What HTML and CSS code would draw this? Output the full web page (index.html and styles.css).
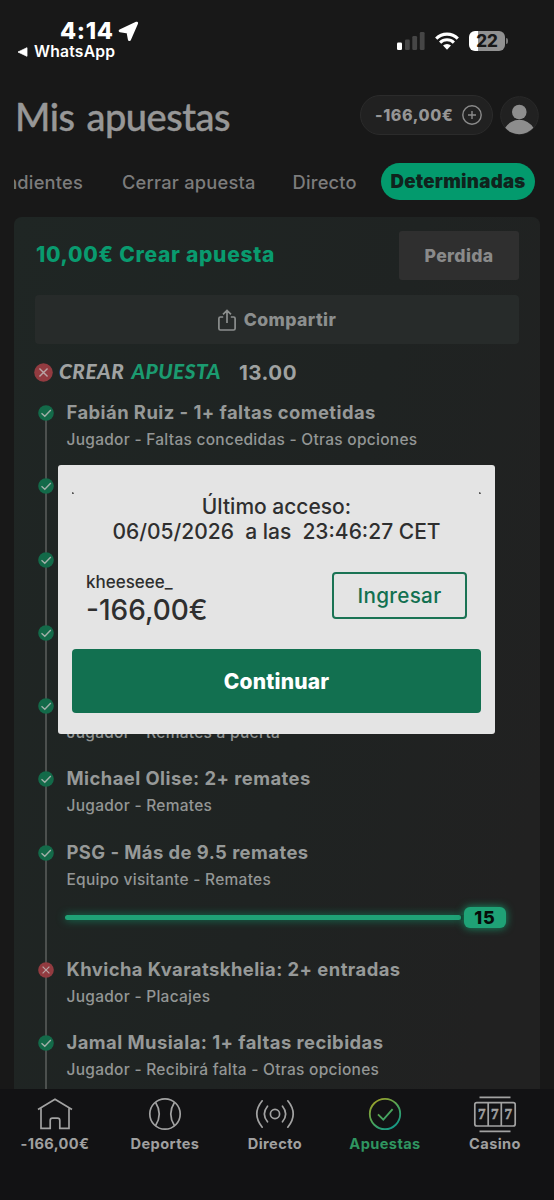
FILE: index.html
```html
<!DOCTYPE html>
<html lang="es">
<head>
<meta charset="utf-8">
<title>Mis apuestas</title>
<link rel="stylesheet" href="styles.css">
</head>
<body>
<svg class="defs" width="0" height="0">
  <defs>
    <symbol id="ok" viewBox="0 0 16 16"><circle cx="8" cy="8" r="7.8" fill="#136a49"/><path d="M3.5 8.3 6.8 11.3 12.8 5.1" fill="none" stroke="#a4b0aa" stroke-width="1.4"/></symbol>
    <symbol id="ko" viewBox="0 0 16 16"><circle cx="8" cy="8" r="7.8" fill="#923b40"/><path d="M4.6 4.6 11.4 11.4M11.4 4.6 4.6 11.4" fill="none" stroke="#b9a5a5" stroke-width="1.2"/></symbol>
    <linearGradient id="ring" gradientUnits="userSpaceOnUse" x1="8" y1="4" x2="28" y2="34"><stop offset="0" stop-color="#a3a025"/><stop offset="0.5" stop-color="#4fa658"/><stop offset="0.95" stop-color="#169885"/></linearGradient>
  </defs>
</svg>
<div class="phone">
  <div class="status">
    <div class="status-left">
      <div class="clock"><span class="time">4:14</span><svg width="21" height="21" viewBox="0 0 21 21"><path d="M18.6 2.2 2.2 9.8 10 11 11.4 18.6Z" fill="#fff" stroke="#fff" stroke-width="3" stroke-linejoin="round"/></svg></div>
      <div class="back"><svg width="11" height="10" viewBox="0 0 11 10"><path d="M10 .7V9.3L1 5Z" fill="#fff" stroke="#fff" stroke-width=".8" stroke-linejoin="round"/></svg><span class="whats">WhatsApp</span></div>
    </div>
    <div class="status-right">
      <svg width="28" height="18" viewBox="0 0 28 18"><rect x="0" y="10.5" width="5" height="7.5" rx="1.3" fill="#fff"/><rect x="8" y="7.5" width="4.8" height="10.5" rx="1.3" fill="#464646"/><rect x="15.3" y="4" width="4.8" height="14" rx="1.3" fill="#464646"/><rect x="22.8" y="0" width="4.8" height="18" rx="1.3" fill="#464646"/></svg>
      <svg class="wifi" width="24" height="18" viewBox="0 0 24 18"><g fill="none" stroke="#fff" stroke-width="3.1"><path d="M1.2 6.6a15.3 15.3 0 0 1 21.6 0"/><path d="M5.1 10.6a9.8 9.8 0 0 1 13.8 0"/></g><path d="M12 17.8 8 13.6a5.6 5.6 0 0 1 8 0Z" fill="#fff"/></svg>
      <div class="battery"><span>22</span></div><i class="tip"></i>
    </div>
  </div>
  <header class="head">
    <h1 class="title"><span>Mis apuestas</span></h1>
    <div class="balance"><span class="bal">-166,00€</span><svg width="20" height="20" viewBox="0 0 20 20" fill="none" stroke="#8b8b8b" stroke-width="1.4"><circle cx="10" cy="10" r="9.2"/><path d="M10 6v8M6 10h8"/></svg></div>
    <svg class="avatar" width="39" height="39" viewBox="0 0 39 39"><circle cx="19.5" cy="19.5" r="18.8" fill="#212121" stroke="#292929"/><circle cx="19.3" cy="16" r="7.3" fill="#8d8d8d"/><path d="M5.2 31.8a16.4 16.4 0 0 1 28.2 0 18.8 18.8 0 0 1-28.2 0Z" fill="#8d8d8d"/></svg>
  </header>
  <nav class="tabs">
    <div class="clip"><span class="tab">Pendientes</span></div>
    <span class="tab t2">Cerrar apuesta</span>
    <span class="tab">Directo</span>
    <span class="pill">Determinadas</span>
  </nav>
  <main class="card">
    <div class="card-top"><span class="stake">10,00€ Crear apuesta</span><div class="lost"><span>Perdida</span></div></div>
    <div class="share"><svg width="18" height="22" viewBox="0 0 18 22" fill="none" stroke="#8c8f8e" stroke-width="1.7"><path d="M5.2 8H2.4Q.9 8 .9 9.5V19.5Q.9 21 2.4 21H15.6Q17.1 21 17.1 19.5V9.5Q17.1 8 15.6 8H12.8M9 14V1.6M5 5.4 9 1.4 13 5.4"/></svg><span>Compartir</span></div>
    <div class="builder"><svg width="19" height="19"><use href="#ko"/></svg><span class="b1">CREAR</span><span class="b2">APUESTA</span><span class="odds">13.00</span></div>
    <ul class="legs">
      <li class="leg"><svg class="mark"><use href="#ok"/></svg><div class="name"><span>Fabián Ruiz - 1+ faltas cometidas</span></div><div class="market"><span>Jugador - Faltas concedidas - Otras opciones</span></div></li>
      <li class="leg"><svg class="mark"><use href="#ok"/></svg></li>
      <li class="leg"><svg class="mark"><use href="#ok"/></svg></li>
      <li class="leg"><svg class="mark"><use href="#ok"/></svg></li>
      <li class="leg"><svg class="mark"><use href="#ok"/></svg><div class="name"></div><div class="market"><span>Jugador - Remates a puerta</span></div></li>
      <li class="leg"><svg class="mark"><use href="#ok"/></svg><div class="name"><span>Michael Olise: 2+ remates</span></div><div class="market"><span>Jugador - Remates</span></div></li>
      <li class="leg tall"><svg class="mark"><use href="#ok"/></svg><div class="name"><span>PSG - Más de 9.5 remates</span></div><div class="market"><span>Equipo visitante - Remates</span></div>
        <div class="meter"><i class="bar"></i><i class="notch"></i><b class="count"><span>15</span></b></div></li>
      <li class="leg"><svg class="mark"><use href="#ko"/></svg><div class="name"><span>Khvicha Kvaratskhelia: 2+ entradas</span></div><div class="market"><span>Jugador - Placajes</span></div></li>
      <li class="leg"><svg class="mark"><use href="#ok"/></svg><div class="name"><span>Jamal Musiala: 1+ faltas recibidas</span></div><div class="market"><span>Jugador - Recibirá falta - Otras opciones</span></div></li>
    </ul>
  </main>
  <nav class="dock">
    <div class="item"><svg width="38" height="38" viewBox="0 0 38 38" fill="none" stroke="#a2a2a2" stroke-width="1.7"><path d="M2 14.6 19 4.3 36 14.6M5 13.5V33.4H14.2V25.5Q14.2 23.2 16.5 23.2H21.5Q23.8 23.2 23.8 25.5V33.4H33V13.5"/></svg><span>-166,00€</span></div>
    <div class="item"><svg width="38" height="38" viewBox="0 0 38 38" fill="none" stroke="#a2a2a2" stroke-width="1.7"><circle cx="19" cy="19" r="15.2"/><path d="M9.5 7.2Q17 19 9.5 30.8M28.5 7.2Q21 19 28.5 30.8"/></svg><span>Deportes</span></div>
    <div class="item"><svg width="42" height="38" viewBox="0 0 42 38" fill="none" stroke="#a2a2a2" stroke-width="1.7" stroke-linecap="round"><circle cx="21" cy="19" r="4.6"/><path d="M13.5 11.2Q7.2 19 13.5 26.8M28.5 11.2Q34.8 19 28.5 26.8M8.2 5.8Q-2.6 19 8.2 32.2M33.8 5.8Q44.6 19 33.8 32.2"/></svg><span>Directo</span></div>
    <div class="item on"><svg width="38" height="38" viewBox="0 0 38 38" fill="none" stroke="url(#ring)" stroke-width="1.8"><circle cx="19" cy="19" r="15.2"/><path d="M12 19.4 17.3 24.6 26.6 14.2"/></svg><span>Apuestas</span></div>
    <div class="item"><svg width="44" height="38" viewBox="0 0 44 38" fill="none" stroke="#a2a2a2" stroke-width="1.7"><rect x="1.8" y="7.6" width="40.4" height="23.4" rx="2"/><path d="M15.2 7.6V31M28.3 7.6V31M6.5 2.4H37.5M6.5 36.4H37.5"/><g class="sevens"><text x="8.7" y="23.8">7</text><text x="21.8" y="23.8">7</text><text x="35.2" y="23.8">7</text></g></svg><span>Casino</span></div>
  </nav>
  <section class="modal">
    <div class="corners"><i></i><i></i></div>
    <p class="last">Último acceso:<br>06/05/2026&nbsp; a las&nbsp; 23:46:27 CET</p>
    <div class="account">
      <div><div class="user"><span>kheeseee_</span></div><div class="money"><span>-166,00€</span></div></div>
      <div class="deposit"><span>Ingresar</span></div>
    </div>
    <div class="go"><span>Continuar</span></div>
  </section>
</div>
</body>
</html>
```
FILE: styles.css
```css
* { box-sizing: border-box; }
body { margin: 0; background: #181818; font-family: Inter, "Liberation Sans", sans-serif; }
.defs { position: absolute; }
.phone { position: relative; width: 554px; height: 1200px; overflow: hidden; display: flex; flex-direction: column; background: #181818; }
.phone span { white-space: nowrap; }
svg { display: block; flex: none; }

.status { height: 80px; display: flex; justify-content: space-between; padding: 20px 46px 0 17px; }
.clock { display: flex; padding-left: 43px; gap: 5px; height: 22px; align-items: center; }
.time { font-size: 23.5px; line-height: 22px; font-weight: 800; color: #fff; letter-spacing: 0.6px; }
.back { display: flex; align-items: center; gap: 6px; height: 20px; }
.whats { font-size: 15.7px; line-height: 18px; font-weight: 600; color: #fff; letter-spacing: 0.2px; }
.status-right { display: flex; align-items: flex-start; padding-top: 12px; }
.wifi { margin: 0 10px 0 10px; }
.battery { width: 36px; height: 20px; margin-top: -1px; border-radius: 6px; background: linear-gradient(90deg, #fff 0 8.5px, #919191 8.5px); text-align: center; font-size: 17px; line-height: 20px; font-weight: 800; color: #181818; }
.tip { width: 2px; height: 6px; margin: 6px 0 0 1px; border-radius: 0 3px 3px 0; background: #777; }

.head { height: 74px; padding: 0 15px 3px 15px; display: flex; align-items: center; }
.title { margin: 0; flex: 1; font: 500 38px/44px Lato, sans-serif; color: #979797; letter-spacing: -0.5px; word-spacing: 3px; -webkit-text-stroke: 0.4px #979797; }
.balance { width: 133px; height: 40px; border: 1px solid #2b2b2b; border-radius: 20px; background: #212121; display: flex; align-items: center; justify-content: space-between; padding: 0 10px 0 14px; margin: -1px 7px 0 0; }
.bal { font-size: 16px; font-weight: 800; color: #969696; letter-spacing: 0.6px; }

.tabs { height: 63px; padding: 9px 19px 17px 14px; display: flex; align-items: center; }
.clip { width: 69px; margin-right: 39px; overflow: hidden; display: flex; justify-content: flex-end; }
.tab { font-size: 18.3px; line-height: 24px; font-weight: 500; color: #7c7c7c; letter-spacing: 0.2px; }
.t2 { margin-right: 37px; }
.pill { margin-left: auto; width: 154px; height: 37px; border-radius: 19px; background: #039a6d; display: flex; align-items: center; justify-content: center; font-size: 18.7px; font-weight: 900; color: #10231d; letter-spacing: 0.25px; }

.card { margin: 0 14px; height: 872px; padding: 14px 21px 0; border-radius: 8px 8px 0 0; background: linear-gradient(104deg, #1f2624 0%, #1f2322 55%, #212121 90%); overflow: hidden; flex: none; }
.card-top { display: flex; justify-content: space-between; align-items: center; height: 49px; }
.stake { font-size: 21px; font-weight: 800; color: #099b6f; letter-spacing: 0.72px; margin: -2px 0 0 1px; }
.lost { width: 120px; height: 49px; border-radius: 3px; background: #2f2f2f; display: flex; align-items: center; justify-content: center; font-size: 17.6px; font-weight: 800; color: #8a8a8a; letter-spacing: 0.35px; }
.share { margin-top: 15px; height: 49px; border-radius: 4px; background: #272b2a; display: flex; align-items: center; justify-content: center; gap: 8px; font-size: 17.6px; font-weight: 800; color: #8c8f8e; letter-spacing: 0.4px; }
.builder { height: 28px; margin: 14px 0 0 -1px; display: flex; align-items: center; }
.b1, .b2 { font: italic 900 20.8px/28px Lato, sans-serif; margin-top: -2px; }
.b1 { margin-left: 6px; color: #a0a3a2; letter-spacing: 0.5px; }
.b2 { margin-left: 7px; color: #1b9b70; letter-spacing: 0.45px; }
.odds { margin-left: 18px; font-size: 20.5px; font-weight: 700; color: #9fa2a1; letter-spacing: 0.5px; }

.legs { list-style: none; margin: 13px 0 0; padding: 0; }
.leg { position: relative; height: 73.25px; padding-left: 31.5px; }
.leg::before { content: ""; position: absolute; left: 10px; top: 14px; width: 2px; height: 100%; background: #4c504e; }
.leg.tall { height: 117px; }
.mark { position: absolute; left: 3px; top: 6px; width: 16px; height: 16px; }
.name { height: 26px; font-size: 18.4px; line-height: 26px; font-weight: 700; color: #969998; letter-spacing: 0.45px; }
.market { height: 30px; font-size: 15.5px; line-height: 30px; font-weight: 500; color: #939695; letter-spacing: 0.27px; }
.meter { display: flex; align-items: center; height: 22px; margin: 12px 13px 0 -2px; }
.bar { flex: 1; height: 5px; border-radius: 3px; background: #1fa276; box-shadow: 0 0 8px #13835f; }
.notch { width: 3px; height: 5px; background: #12231d; }
.count { width: 42px; height: 21px; border-radius: 6px; background: #1fa276; box-shadow: 0 0 9px #15976a; color: #060b09; font-size: 18px; line-height: 21px; font-weight: 800; text-align: center; letter-spacing: 1px; }

.dock { flex: none; height: 111px; background: #121214; display: grid; grid-template-columns: repeat(5, 110px); padding: 6px 2px 0 0; z-index: 1; }
.item { display: flex; flex-direction: column; align-items: center; font-size: 14.6px; line-height: 20px; font-weight: 700; color: #a0a0a0; gap: 1px; letter-spacing: 0.4px; }
.on { color: #2f9560; }
.sevens text { font: 700 15px "Liberation Serif", serif; fill: #a2a2a2; stroke: #a2a2a2; stroke-width: .5; text-anchor: middle; letter-spacing: 0; }

.modal { position: absolute; z-index: 2; left: 58px; top: 465px; width: 437px; height: 269px; border-radius: 3px; background: #e4e4e4; padding: 27px 14px 0; color: #2f2f2f; }
.corners { display: flex; justify-content: space-between; height: 2px; }
.corners i { width: 2px; height: 2px; background: #555; border-radius: 0 2px 0 0; }
.last { margin: 0; text-align: center; font-size: 21px; line-height: 25px; font-weight: 500; }
.account { display: flex; justify-content: space-between; padding: 28px 14px 0; }
.user { font-size: 17px; line-height: 20px; font-weight: 500; }
.money { font-size: 28px; line-height: 37px; font-weight: 500; }
.deposit { width: 135px; height: 47px; border: 2px solid #1a7354; border-radius: 4px; color: #127050; font-size: 20.7px; font-weight: 500; display: flex; align-items: center; justify-content: center; letter-spacing: 0.3px; }
.go { margin-top: 20px; height: 64px; border-radius: 4px; background: #127050; color: #fff; font-size: 21px; font-weight: 800; display: flex; align-items: center; justify-content: center; letter-spacing: 0.2px; }
```
